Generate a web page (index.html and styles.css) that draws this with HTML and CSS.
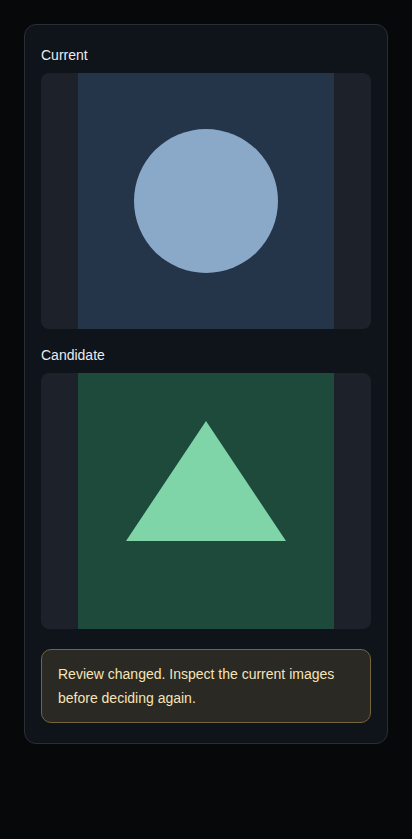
FILE: index.html
```html
<!DOCTYPE html>
<html>
<head>
<meta charset="utf-8">
<link rel="stylesheet" href="styles.css">
</head>
<body>
<div class="card">
  <section class="panel">
    <div class="label">Current</div>
    <div class="frame">
      <svg class="art" width="256" height="256" viewBox="0 0 256 256">
        <rect width="256" height="256" fill="#253549"/>
        <circle cx="128" cy="128" r="72" fill="#8aa9c8"/>
      </svg>
    </div>
  </section>
  <section class="panel">
    <div class="label">Candidate</div>
    <div class="frame">
      <svg class="art" width="256" height="256" viewBox="0 0 256 256">
        <rect width="256" height="256" fill="#1e4a3c"/>
        <polygon points="128,48 208,168 48,168" fill="#7fd4a8"/>
      </svg>
    </div>
  </section>
  <div class="notice">Review changed. Inspect the current images before deciding again.</div>
</div>
</body>
</html>
```
FILE: styles.css
```css
html, body {
  margin: 0;
  padding: 0;
  background: #07080a;
}
body {
  font-family: "Liberation Sans", Arial, sans-serif;
  padding: 24px;
}
.card {
  background: #0f131a;
  border: 1px solid #2a2f37;
  border-radius: 12px;
  padding: 20px 16px;
  display: flex;
  flex-direction: column;
  gap: 16px;
}
.panel {
  display: flex;
  flex-direction: column;
  gap: 8px;
}
.label {
  font-size: 14px;
  line-height: 20px;
  color: #e6edf3;
}
.frame {
  height: 256px;
  background: #1c212a;
  border-radius: 8px;
  display: flex;
  justify-content: center;
  overflow: hidden;
}
.art {
  display: block;
}
.notice {
  margin-top: 4px;
  border: 1px solid #76653d;
  background: #2a2924;
  border-radius: 10px;
  padding: 12px 16px;
  font-size: 14px;
  line-height: 24px;
  color: #f6e4b9;
}
```
